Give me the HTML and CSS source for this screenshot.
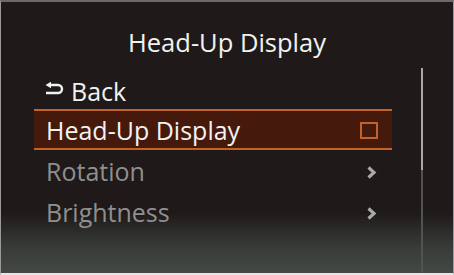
FILE: index.html
```html
<!DOCTYPE html>
<html>
<head>
<meta charset="utf-8">
<link rel="stylesheet" href="styles.css">
</head>
<body>
<div class="screen">
  <div class="title">Head-Up Display</div>
  <div class="body">
    <ul class="menu">
      <li class="item back">
        <svg class="back-icon" width="20" height="14" viewBox="0 0 20 14">
          <path d="M5 3 H13 A4 4 0 0 1 13 11 H1" fill="none" stroke="#f2f2f2" stroke-width="2.4"/>
          <path d="M0.5 3 L6 -0.3 L6 6.3 Z" fill="#f2f2f2"/>
        </svg>
        <span>Back</span>
      </li>
      <li class="item selected">
        <span>Head-Up Display</span>
        <span class="check"></span>
      </li>
      <li class="item dim">
        <span>Rotation</span>
        <svg class="chev" width="11" height="13" viewBox="0 0 11 13"><path d="M2.5 1.5 L8 6.5 L2.5 11.5" fill="none" stroke="#a9a9a9" stroke-width="3.2"/></svg>
      </li>
      <li class="item dim">
        <span>Brightness</span>
        <svg class="chev" width="11" height="13" viewBox="0 0 11 13"><path d="M2.5 1.5 L8 6.5 L2.5 11.5" fill="none" stroke="#a9a9a9" stroke-width="3.2"/></svg>
      </li>
    </ul>
    <div class="scroll"><div class="thumb"></div></div>
  </div>
</div>
</body>
</html>
```
FILE: styles.css
```css
html, body {
  margin: 0;
  padding: 0;
  background: #d8d8d8;
}
.screen {
  box-sizing: border-box;
  width: 454px;
  height: 275px;
  border-top: 2px solid #6a6a6a;
  border-left: 1px solid #9a9a9a;
  border-right: 1px solid #9a9a9a;
  border-bottom: 2px solid #e6e6e6;
  background: linear-gradient(to bottom, #1f1a19 0%, #1f1a19 78%, #2d2e2c 85%, #3a3e3b 92%, #444946 100%);
  font-family: "Open Sans", "DejaVu Sans", sans-serif;
  display: flex;
  flex-direction: column;
  overflow: hidden;
}
.title {
  color: #f2f2f2;
  font-size: 25.5px;
  line-height: 30px;
  height: 30px;
  margin-top: 25px;
  text-align: center;
}
.body {
  flex: 1;
  display: flex;
  margin-top: 11px;
}
.menu {
  list-style: none;
  margin: 0 0 0 33px;
  padding: 0;
  width: 358px;
}
.item {
  box-sizing: border-box;
  height: 41px;
  display: flex;
  align-items: center;
  justify-content: space-between;
  padding: 0 14px 0 12px;
  font-size: 25px;
  color: #f2f2f2;
}
.back {
  justify-content: flex-start;
  padding-left: 11px;
  padding-top: 4px;
}
.back-icon {
  margin-right: 6px;
  margin-top: -3px;
}
.selected {
  background: #45190b;
  border-top: 2px solid #c4622b;
  border-bottom: 2px solid #c4622b;
  padding-top: 1px;
}
.check {
  width: 14px;
  height: 13px;
  border: 2px solid #c4622b;
}
.dim {
  color: #8f8f8f;
}
.chev {
  margin-right: 1px;
  margin-top: 3px;
}
.scroll {
  margin-left: 29px;
  width: 2px;
  background: #505352;
  display: flex;
  flex-direction: column;
}
.thumb {
  height: 102px;
  background: #a8a8a8;
}
```
